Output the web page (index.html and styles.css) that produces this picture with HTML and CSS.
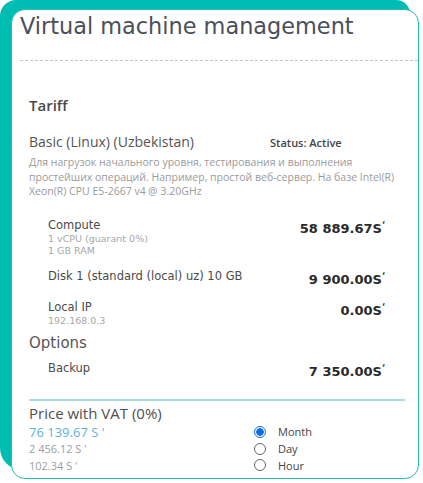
FILE: index.html
```html
<!DOCTYPE html>
<html>
<head>
<meta charset="utf-8">
<link rel="stylesheet" href="styles.css">
</head>
<body>
<div class="frame">
  <div class="card">
    <h1 class="title">Virtual machine management</h1>
    <div class="sep"></div>
    <section class="tariff">
      <h2 class="sec-title">Tariff</h2>
      <div class="plan-row">
        <div class="plan-name">Basic (Linux) (Uzbekistan)</div>
        <div class="status">Status: Active</div>
      </div>
      <p class="desc">Для нагрузок начального уровня, тестирования и выполнения простейших операций. Например, простой веб-сервер. На базе Intel(R) Xeon(R) CPU E5-2667 v4 @ 3.20GHz</p>
      <div class="items">
        <div class="item">
          <div class="item-info">
            <div class="item-name">Compute</div>
            <div class="item-sub">1 vCPU (guarant 0%)</div>
            <div class="item-sub">1 GB RAM</div>
          </div>
          <div class="price">58 889.67S<span class="cur">‘</span></div>
        </div>
        <div class="item">
          <div class="item-info">
            <div class="item-name">Disk 1 (standard (local) uz) 10 GB</div>
          </div>
          <div class="price">9 900.00S<span class="cur">‘</span></div>
        </div>
        <div class="item">
          <div class="item-info">
            <div class="item-name">Local IP</div>
            <div class="item-sub">192.168.0.3</div>
          </div>
          <div class="price">0.00S<span class="cur">‘</span></div>
        </div>
      </div>
    </section>
    <section class="options">
      <h2 class="opt-title">Options</h2>
      <div class="item">
        <div class="item-info">
          <div class="item-name">Backup</div>
        </div>
        <div class="price">7 350.00S<span class="cur">‘</span></div>
      </div>
    </section>
    <section class="total">
      <h2 class="total-title">Price with VAT (0%)</h2>
      <div class="total-row">
        <div class="amounts">
          <div class="amount main">76 139.67 S '</div>
          <div class="amount">2 456.12 S '</div>
          <div class="amount">102.34 S '</div>
        </div>
        <div class="periods">
          <label class="period"><span class="radio checked"></span>Month</label>
          <label class="period"><span class="radio"></span>Day</label>
          <label class="period"><span class="radio"></span>Hour</label>
        </div>
      </div>
    </section>
  </div>
</div>
</body>
</html>
```
FILE: styles.css
```css
* { box-sizing: border-box; }
html, body { margin: 0; padding: 0; background: #ffffff; }
body { width: 423px; height: 483px; overflow: hidden; font-family: "DejaVu Sans", Verdana, sans-serif; }

.frame {
  width: 410px;
  height: 470px;
  background: #00bdb3;
  border-radius: 16px 14px 16px 22px;
  padding: 9px 0 0 11px;
}
.card {
  width: 408px;
  height: 470px;
  background: #fff;
  border: 1px solid #1ebdb5;
  border-radius: 14px;
  overflow: hidden;
}
.title {
  margin: 0;
  padding: 2px 0 0 8px;
  font-family: "DejaVu Sans", Verdana, sans-serif;
  font-weight: normal;
  font-size: 22.4px;
  line-height: 28px;
  color: #4a505a;
}
.sep {
  margin: 20px 0 0 8px;
  border-top: 1px dashed #c4c4c4;
}
section { padding: 0 33px 0 17px; }
.tariff { padding-top: 34px; }
.sec-title {
  margin: 0;
  font-family: "Open Sans", sans-serif;
  font-weight: 600;
  font-size: 15px;
  line-height: 20px;
  color: #4b4b4b;
}
.plan-row {
  display: flex;
  align-items: baseline;
  margin-top: 17px;
}
.plan-name {
  width: 241px;
  font-family: "Open Sans", sans-serif;
  font-size: 14px;
  line-height: 20px;
  color: #555;
}
.status {
  font-family: "Open Sans", sans-serif;
  font-weight: 600;
  font-size: 11px;
  color: #444;
}
.desc {
  margin: 3px -22px 0 0;
  font-family: "Open Sans", sans-serif;
  font-size: 10.5px;
  line-height: 14.5px;
  color: #9b9b9b;
}
.items { padding-top: 19px; }
.item {
  display: flex;
  justify-content: space-between;
  align-items: flex-start;
  padding-left: 19px;
  margin-bottom: 12px;
}
.items .item:last-child { margin-bottom: 6px; }
.item-name {
  font-size: 11.5px;
  line-height: 15px;
  color: #4a4a4a;
}
.item-sub {
  font-size: 9.5px;
  line-height: 12px;
  color: #a8a8a8;
}
.price {
  font-family: "DejaVu Sans", Verdana, sans-serif;
  font-weight: bold;
  font-size: 13px;
  line-height: 16px;
  color: #2a2a2a;
}
.cur { font-size: 8px; vertical-align: 5px; }
.opt-title {
  margin: 0 0 8px 0;
  font-family: "DejaVu Sans", Verdana, sans-serif;
  font-weight: normal;
  font-size: 15px;
  line-height: 20px;
  color: #555;
}
.total { padding-top: 7px; padding-right: 13px; }
.total-title {
  margin: 0;
  border-top: 2px solid #a9dbe5;
  padding-top: 2px;
  font-family: "Open Sans", sans-serif;
  font-weight: 500;
  font-size: 15px;
  line-height: 20px;
  color: #505050;
}
.total-row { display: flex; margin-top: 1px; }
.amounts { width: 225px; }
.amount {
  font-family: "Open Sans", sans-serif;
  font-size: 11px;
  line-height: 17px;
  color: #9d9d9d;
}
.amount.main { font-size: 13px; color: #5db4d8; line-height: 16px; }
.periods { padding-top: 0; }
.period {
  display: flex;
  align-items: center;
  height: 16.7px;
  font-family: "Open Sans", sans-serif;
  font-size: 11px;
  color: #444;
}
.radio {
  width: 12px;
  height: 12px;
  border: 1px solid #666;
  border-radius: 50%;
  margin-right: 12px;
  display: inline-block;
}
.radio.checked {
  border: 1px solid #0b6ee8;
  background: radial-gradient(circle, #0b6ee8 0 3.5px, #fff 4px);
}
```
